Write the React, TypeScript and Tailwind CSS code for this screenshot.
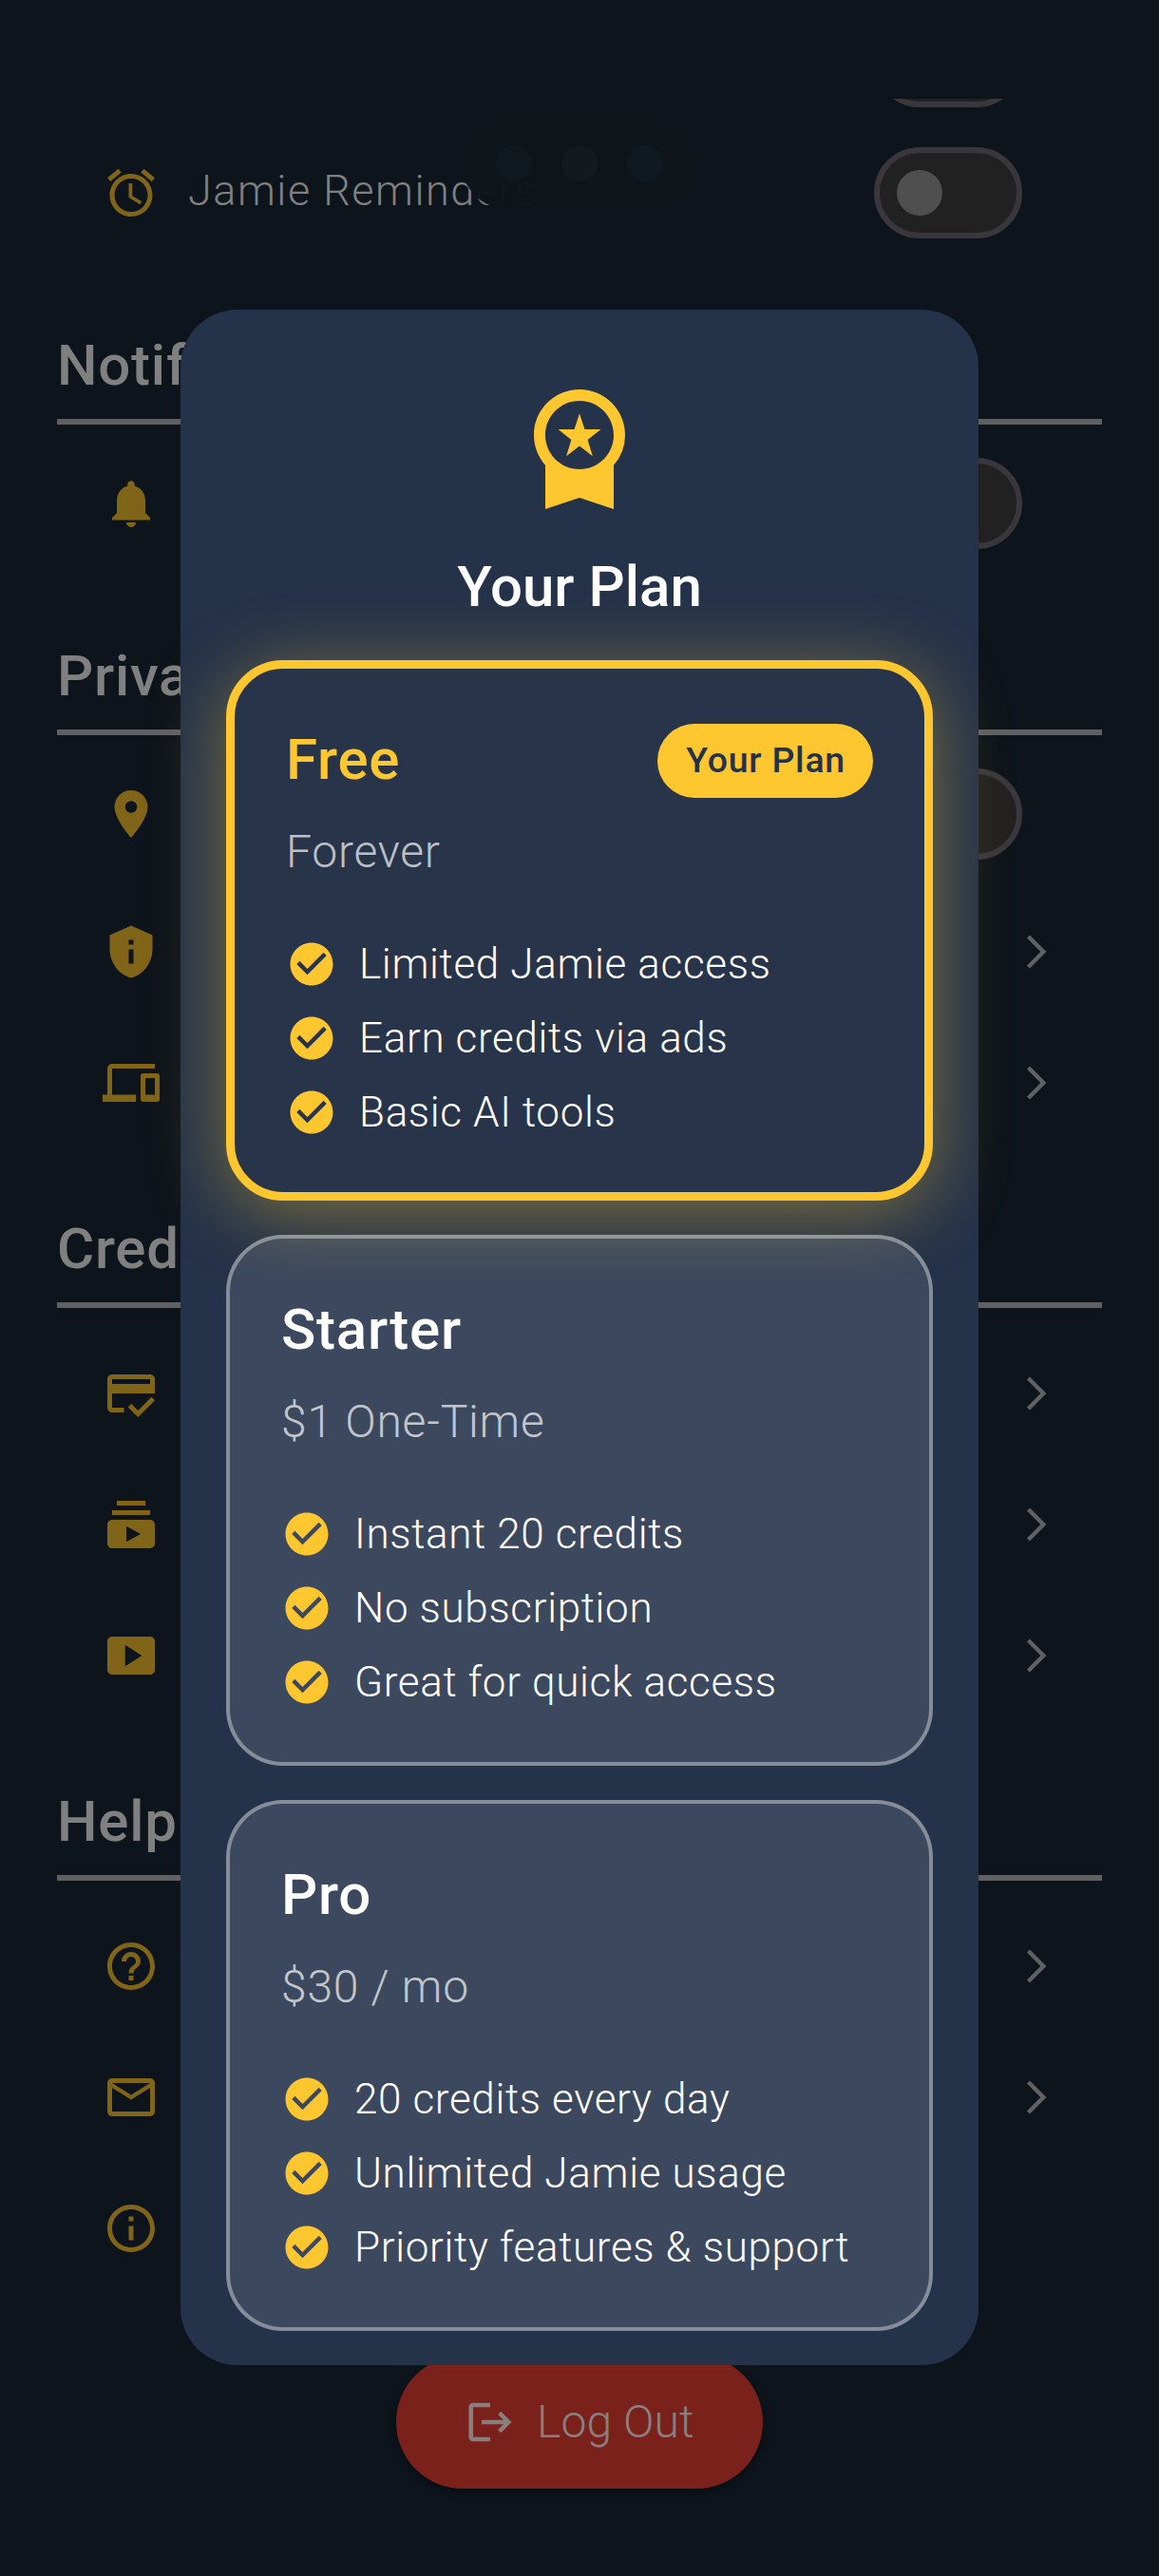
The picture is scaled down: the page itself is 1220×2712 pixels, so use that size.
import type { ReactNode } from "react";
import type { IconType } from "react-icons";
import {
  MdAlarm,
  MdCheckCircle,
  MdCreditScore,
  MdDevices,
  MdHelpOutline,
  MdInfoOutline,
  MdLocationOn,
  MdLogout,
  MdMailOutline,
  MdNotifications,
  MdPrivacyTip,
  MdSmartDisplay,
  MdSubscriptions,
  MdWorkspacePremium,
} from "react-icons/md";

function Toggle() {
  return (
    <div className="mr-9 flex h-24 w-[156px] shrink-0 items-center rounded-full border-[6px] border-[#3a373c] bg-[#212121] pl-[18px]">
      <div className="size-12 rounded-full bg-[#4f4f4f]" />
    </div>
  );
}

function Chevron() {
  return (
    <svg viewBox="0 0 24 24" className="size-[42px] shrink-0 fill-[#606163]">
      <path d="M6.23 20.23 8 22l10-10L8 2 6.23 3.77 14.46 12z" />
    </svg>
  );
}

type RowProps = { icon: IconType; label?: string; toggle?: boolean; chevron?: boolean };

function Row({ icon: Icon, label, toggle, chevron }: RowProps) {
  return (
    <div className={`flex items-center px-12 ${toggle ? "h-[152px]" : "h-[138px]"}`}>
      <Icon className="size-[60px] shrink-0 text-[#806418]" />
      <span className="ml-[30px] flex-1 pb-1.5 text-[45px] leading-none font-light tracking-[1.5px] text-[#808080]">
        {label}
      </span>
      {toggle && <Toggle />}
      {chevron && <Chevron />}
    </div>
  );
}

function Section({ title, tight, children }: { title: string; tight?: boolean; children: ReactNode }) {
  return (
    <section>
      <div className="flex h-[168px] flex-col justify-end border-b-[6px] border-[#606062] pb-[21px]">
        <h2 className="text-[60px] leading-[70px] font-medium tracking-[0.75px] text-[#808080]">{title}</h2>
      </div>
      <div className={tight ? "pt-[7px]" : "pt-[21px]"}>{children}</div>
    </section>
  );
}

type Plan = { name: string; price: string; features: string[]; current?: boolean };

const plans: Plan[] = [
  {
    name: "Free",
    price: "Forever",
    features: ["Limited Jamie access", "Earn credits via ads", "Basic AI tools"],
    current: true,
  },
  {
    name: "Starter",
    price: "$1 One-Time",
    features: ["Instant 20 credits", "No subscription", "Great for quick access"],
  },
  {
    name: "Pro",
    price: "$30 / mo",
    features: ["20 credits every day", "Unlimited Jamie usage", "Priority features & support"],
  },
];

function PlanCard({ name, price, features, current }: Plan) {
  return (
    <article
      className={`rounded-[60px] px-[54px] pt-[58px] pb-[45px] ${
        current
          ? "border-[9px] border-[#ffc72f] bg-[#283449] shadow-[0_12px_80px_0_rgba(255,199,47,0.42)]"
          : "border-4 border-white/38 bg-white/11 bg-clip-border"
      }`}
    >
      <div className="flex h-[78px] items-center justify-between">
        <h3
          className={`pb-[3px] text-[60px] leading-[70px] font-medium tracking-[0.75px] ${
            current ? "text-[#ffc72f]" : "text-white"
          }`}
        >
          {name}
        </h3>
        {current && (
          <span className="flex h-[78px] items-center rounded-full bg-[#ffc72f] pr-[29px] pl-[30px] text-[37.5px] leading-none font-medium tracking-[0.75px] text-[#24324a]">
            Your Plan
          </span>
        )}
      </div>
      <p className="mt-[29px] text-[48px] leading-[56px] font-light tracking-[0.75px] text-white/70">{price}</p>
      <ul className="mt-[51px]">
        {features.map((feature) => (
          <li key={feature} className="flex h-[78px] items-center gap-[23px]">
            <MdCheckCircle className="size-[54px] shrink-0 text-[#ffc72f]" />
            <span className="text-[44px] leading-none font-light tracking-[0.65px] whitespace-nowrap text-white">
              {feature}
            </span>
          </li>
        ))}
      </ul>
    </article>
  );
}

export default function App() {
  return (
    <div className="relative h-[2712px] w-[1220px] overflow-hidden bg-[#0d141b] pt-[104px] font-[Roboto,sans-serif]">
      <main className="px-[60px]">
        <div className="flex h-[23px] items-end justify-end overflow-hidden pr-12 pb-[14px]">
          <Toggle />
        </div>
        <Row icon={MdAlarm} label="Jamie Reminders" toggle />
        <Section title="Notifications" tight>
          <Row icon={MdNotifications} toggle />
        </Section>
        <Section title="Privacy" tight>
          <Row icon={MdLocationOn} toggle />
          <Row icon={MdPrivacyTip} chevron />
          <Row icon={MdDevices} chevron />
        </Section>
        <Section title="Credits">
          <Row icon={MdCreditScore} chevron />
          <Row icon={MdSubscriptions} chevron />
          <Row icon={MdSmartDisplay} chevron />
        </Section>
        <Section title="Help">
          <Row icon={MdHelpOutline} chevron />
          <Row icon={MdMailOutline} chevron />
          <Row icon={MdInfoOutline} />
        </Section>
        <button className="mx-auto mt-[65px] flex h-[140px] w-[386px] items-center gap-[22px] rounded-full bg-[#7b211b] pl-[72px] text-[48px] leading-none font-light tracking-[0.1px] text-[#8a7f7d] shadow-[0_3px_8px_rgba(0,0,0,0.4)]">
          <MdLogout className="size-[54px]" />
          Log Out
        </button>
      </main>

      {/* Loading pill floating over the list */}
      <div className="absolute top-[124px] left-[486px] flex h-24 w-[248px] items-center justify-center gap-[31px] rounded-full bg-[#0d141b]/98">
        <span className="size-[38px] rounded-full bg-[#111920]" />
        <span className="size-[38px] rounded-full bg-[#141920]" />
        <span className="size-[38px] rounded-full bg-[#111920]" />
      </div>

      <div
        role="dialog"
        className="absolute top-[326px] left-[190px] flex w-[840px] flex-col rounded-[60px] bg-[#24324a] px-12 pt-[72px] pb-9"
      >
        <MdWorkspacePremium className="size-36 self-center text-[#ffc72f]" />
        <h1 className="mt-[41px] text-center text-[60px] leading-[70px] font-medium text-white">Your Plan</h1>
        <div className="mt-[42px] flex flex-col gap-9">
          {plans.map((plan) => (
            <PlanCard key={plan.name} {...plan} />
          ))}
        </div>
      </div>
    </div>
  );
}
